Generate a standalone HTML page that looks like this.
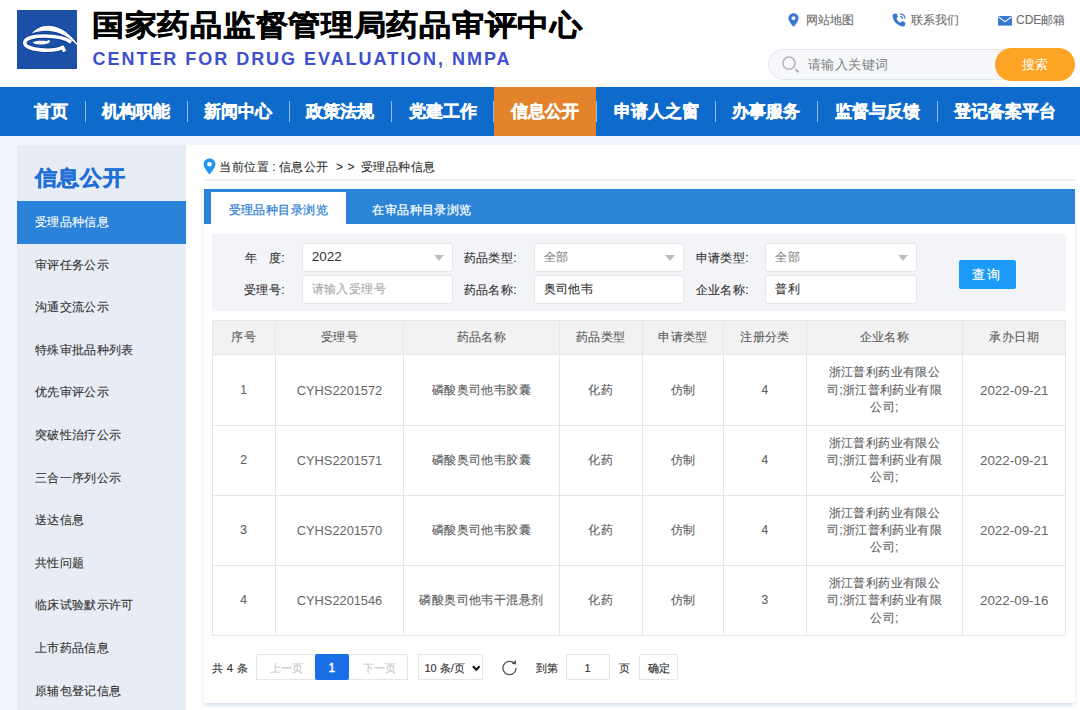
<!DOCTYPE html>
<html><head><meta charset="utf-8">
<style>
*{margin:0;padding:0;box-sizing:border-box}
html,body{width:1080px;height:710px;overflow:hidden;background:#f1f5fc;font-family:"Liberation Sans",sans-serif;position:relative}
.abs{position:absolute}
#hdr{position:absolute;left:0;top:0;width:1080px;height:87px;background:#fff}
#logo{left:17px;top:10px;width:60px;height:59px;background:#1c4fa6}
#t1{left:92px;top:6.5px;font-size:32.75px;font-weight:900;-webkit-text-stroke:.5px #000;letter-spacing:-0.28px;color:#000;white-space:nowrap;line-height:40px;transform:scaleY(.9);transform-origin:0 0}
#t2{left:92.5px;top:47.5px;font-size:18px;font-weight:bold;color:#3d4fcf;white-space:nowrap;letter-spacing:1.97px;line-height:22px}
.tl{font-size:12px;color:#6e6e6e;white-space:nowrap;line-height:16px}
#search{left:768px;top:49px;width:306px;height:31px;border:1px solid #e3e6ec;border-radius:16px;background:#f6f8fc}
#sbtn{left:995px;top:48px;width:80px;height:33px;border-radius:17px;background:#fda424;color:#fff;font-size:13px;line-height:34px;text-align:center}
#nav{left:0;top:87px;width:1080px;height:49px;background:#0e6bcb}
.ni{position:absolute;top:0;height:49px;line-height:49px;color:#fff;font-size:17px;font-weight:bold;-webkit-text-stroke:.4px #fff;white-space:nowrap}
.sep{position:absolute;top:14px;width:1px;height:21px;background:rgba(255,255,255,.55)}
#side{left:17px;top:145px;width:169px;height:600px;background:#e8edf5}
#sideT{left:34.8px;top:164px;font-size:22px;letter-spacing:.7px;font-weight:900;-webkit-text-stroke:.55px #1f6fd6;transform:scaleY(.95);transform-origin:0 0;color:#1f6fd6;line-height:30px;white-space:nowrap}
.si{position:absolute;left:0;width:169px;height:42.6px;line-height:43.6px;padding-left:18px;font-size:12px;letter-spacing:.35px;color:#333;white-space:nowrap}
.si.on{background:#2b82d9;color:#fff}
#panel{left:186px;top:145px;width:894px;height:565px;background:#fff}
#card{left:203.5px;top:189.2px;width:871.5px;height:513.8px;background:#fff;box-shadow:0 2.5px 5px -1px rgba(110,140,190,.35);border-radius:3px}

.hl{height:1px;background:#e6e6e6}
.vl{width:1px;background:#e6e6e6}
.cell{display:flex;align-items:center;justify-content:center;text-align:center;color:#606060;font-size:12px;letter-spacing:.4px;line-height:17.4px;padding-top:0.8px}
.cell.num{font-size:13.4px;letter-spacing:0}
.cell.id{font-size:12.8px;letter-spacing:0}
.lbl{position:absolute;font-size:12px;letter-spacing:.4px;color:#333;line-height:16px;white-space:nowrap}
.inp{position:absolute;height:28.5px;background:#fff;border:1px solid #e4e6ea;border-radius:3px;font-size:12px;letter-spacing:.4px;line-height:26.5px;padding-left:9px;color:#333;white-space:nowrap}
.arr{position:absolute;width:0;height:0;border-left:5.5px solid transparent;border-right:5.5px solid transparent;border-top:6px solid #bdbdbd}
.bc{position:absolute;top:158.5px;font-size:12px;letter-spacing:.45px;color:#333;line-height:16px;white-space:nowrap}
.pg{position:absolute;font-size:11px;letter-spacing:.3px;line-height:16px;white-space:nowrap;color:#333}
.cell,.lbl,.si,.bc,.inp,.tl,.pg{-webkit-text-stroke:.12px currentColor}
.cell.num,.cell.id{-webkit-text-stroke:0;color:#666}
</style></head><body>
<div id="hdr"></div>
<div id="logo" class="abs"></div>
<svg class="abs" style="left:17px;top:10px" width="60" height="59" viewBox="0 0 60 59">
<g stroke="#0a3a9a" stroke-width="1.6" fill="#0a3a9a" opacity=".8">
<path d="M14.6 23.8C23 12.5 46 9.5 64.5 40C46 17 25 19.5 16.8 22.8Z"/>
<path fill="none" stroke-width="5.4" d="M54.2 32.2C44 24.6 9 23.2 7.8 32.6C7.6 40.8 37 42.2 45.6 37.2L47.6 41.6"/>
</g>
<path d="M14.6 23.8C23 12.5 46 9.5 64.5 40C46 17 25 19.5 16.8 22.8Z" fill="#fff"/>
<path d="M54.2 32.2C44 24.6 9 23.2 7.8 32.6C7.6 40.8 37 42.2 45.6 37.2L47.6 41.6" stroke="#fff" stroke-width="3.6" fill="none" stroke-linejoin="round"/>
<path d="M15.8 32.8C18 30.5 26 30.4 29.8 31.2L31.4 30.1L33.4 30.9L31.6 33.2C26 34.6 19 35.2 15.8 32.8Z" fill="#fff"/>
</svg>
<div id="t1" class="abs">国家药品监督管理局药品审评中心</div>
<div id="t2" class="abs">CENTER FOR DRUG EVALUATION, NMPA</div>
<svg class="abs" style="left:788px;top:12.5px" width="11" height="14" viewBox="0 0 11 14"><path d="M5.5 0.3C2.6 0.3 0.4 2.5 0.4 5.2c0 3.2 5.1 8.6 5.1 8.6s5.1-5.4 5.1-8.6C10.6 2.5 8.4 0.3 5.5 0.3z" fill="#3a78d2"/><circle cx="5.5" cy="5.2" r="1.9" fill="#fff"/></svg>
<div class="abs tl" style="left:805.5px;top:11.5px">网站地图</div>
<svg class="abs" style="left:892px;top:13px" width="14" height="14" viewBox="0 0 14 14"><path d="M2.2 0.8L4.6 0.4 6 3.9 4.4 5.2C5.2 7.2 6.7 8.8 8.6 9.7L10 8.1 13.4 9.6 13 12.2C12.7 13.2 11.7 13.7 10.6 13.5 5.6 12.6 1.5 8.5 0.6 3.4 0.4 2.2 1 1.1 2.2 0.8Z" fill="#3a78d2"/><path d="M8 3.2A3 3 0 0 1 10.8 6M8.3 0.9A5.3 5.3 0 0 1 13.1 5.7" stroke="#3a78d2" stroke-width="1.1" fill="none"/></svg>
<div class="abs tl" style="left:910.5px;top:11.5px">联系我们</div>
<svg class="abs" style="left:998px;top:16px" width="14" height="10" viewBox="0 0 14 10"><rect x="0" y="0" width="14" height="9.6" fill="#3a78d2"/><path d="M0.3 0.8L7 5.6 13.7 0.8" stroke="#fff" stroke-width="1.1" fill="none"/></svg>
<div class="abs tl" style="left:1016px;top:11.5px">CDE邮箱</div>
<div id="search" class="abs"></div>
<svg class="abs" style="left:782px;top:55.5px" width="18" height="18" viewBox="0 0 18 18"><circle cx="7" cy="7.2" r="6.1" stroke="#b4b4b4" stroke-width="1.5" fill="none"/><path d="M13.4 13.2L16.5 16.3" stroke="#b4b4b4" stroke-width="2"/></svg>
<div class="abs" style="left:807.8px;top:57px;font-size:13px;letter-spacing:.5px;color:#808080;line-height:16px">请输入关键词</div>
<div id="sbtn" class="abs">搜索</div>
<div id="nav" class="abs">
 <div class="ni" style="left:34px">首页</div>
 <div class="sep" style="left:85px"></div>
 <div class="ni" style="left:102px">机构职能</div>
 <div class="sep" style="left:187px"></div>
 <div class="ni" style="left:204px">新闻中心</div>
 <div class="sep" style="left:289px"></div>
 <div class="ni" style="left:306px">政策法规</div>
 <div class="sep" style="left:391px"></div>
 <div class="ni" style="left:409px">党建工作</div>
 <div class="abs" style="left:494px;top:0;width:102.3px;height:49px;background:#e3842d"></div>
 <div class="sep" style="left:493px"></div>
 <div class="sep" style="left:595.5px"></div>
 <div class="ni" style="left:511px">信息公开</div>
 <div class="ni" style="left:614px">申请人之窗</div>
 <div class="sep" style="left:715px"></div>
 <div class="ni" style="left:732px">办事服务</div>
 <div class="sep" style="left:817px"></div>
 <div class="ni" style="left:835px">监督与反馈</div>
 <div class="sep" style="left:937px"></div>
 <div class="ni" style="left:954px">登记备案平台</div>
</div>
<div id="side" class="abs">
</div>
<div id="sideT" class="abs">信息公开</div>
<div class="abs" style="left:17px;top:201px;width:169px">
 <div class="si on" style="top:0">受理品种信息</div>
 <div class="si" style="top:42.6px">审评任务公示</div>
 <div class="si" style="top:85.2px">沟通交流公示</div>
 <div class="si" style="top:127.8px">特殊审批品种列表</div>
 <div class="si" style="top:170.4px">优先审评公示</div>
 <div class="si" style="top:213px">突破性治疗公示</div>
 <div class="si" style="top:255.6px">三合一序列公示</div>
 <div class="si" style="top:298.2px">送达信息</div>
 <div class="si" style="top:340.8px">共性问题</div>
 <div class="si" style="top:383.4px">临床试验默示许可</div>
 <div class="si" style="top:426px">上市药品信息</div>
 <div class="si" style="top:468.6px">原辅包登记信息</div>
</div>
<div id="panel" class="abs"></div><div id="card" class="abs"></div>
<!-- breadcrumb -->
<svg class="abs" style="left:203px;top:158px" width="13" height="17" viewBox="0 0 13 17"><path d="M6.5 0.5C3.1 0.5 0.6 3.1 0.6 6.3c0 3.7 5.9 10.2 5.9 10.2s5.9-6.5 5.9-10.2C12.4 3.1 9.9 0.5 6.5 0.5z" fill="#2196f3"/><circle cx="6.5" cy="6.3" r="2.3" fill="#fff"/></svg>
<div class="bc" style="left:219.3px">当前位置</div><div class="bc" style="left:272.3px">:</div><div class="bc" style="left:279px">信息公开</div><div class="bc" style="left:336px">&gt;</div><div class="bc" style="left:347.5px">&gt;</div><div class="bc" style="left:361px">受理品种信息</div>
<div class="abs" style="left:203.6px;top:179px;width:871.4px;height:2px;background:#efefef"></div>
<!-- tabs -->
<div class="abs" style="left:203.6px;top:189.2px;width:871.4px;height:35.2px;background:#2b84d8"></div>
<div class="abs" style="left:210.6px;top:192px;width:135.2px;height:32.4px;background:#fff"></div>
<div class="abs" style="left:228.5px;top:201.5px;font-size:12px;letter-spacing:.45px;font-weight:500;-webkit-text-stroke:.25px #2f7fd5;color:#2f7fd5;line-height:16px;white-space:nowrap">受理品种目录浏览</div>
<div class="abs" style="left:372.2px;top:201.5px;font-size:12px;letter-spacing:.45px;font-weight:500;-webkit-text-stroke:.25px #fff;color:#fff;line-height:16px;white-space:nowrap">在审品种目录浏览</div>
<!-- filter -->
<div class="abs" style="left:211.7px;top:233.7px;width:854.5px;height:77.1px;background:#f3f4f8"></div>
<div class="lbl" style="right:795px;top:249.5px">年&nbsp;&nbsp; 度:</div>
<div class="lbl" style="right:795px;top:281.5px">受理号:</div>
<div class="lbl" style="right:563px;top:249.5px">药品类型:</div>
<div class="lbl" style="right:563px;top:281.5px">药品名称:</div>
<div class="lbl" style="right:331px;top:249.5px">申请类型:</div>
<div class="lbl" style="right:331px;top:281.5px">企业名称:</div>
<div class="inp" style="left:301.7px;top:243.3px;width:151.8px;font-size:13.5px;-webkit-text-stroke:0;letter-spacing:0">2022</div>
<div class="inp" style="left:301.7px;top:275.3px;width:151.8px;color:#aaa">请输入受理号</div>
<div class="inp" style="left:533.6px;top:243.3px;width:150.8px;color:#888">全部</div>
<div class="inp" style="left:533.6px;top:275.3px;width:150.8px">奥司他韦</div>
<div class="inp" style="left:765.4px;top:243.3px;width:151.3px;color:#888">全部</div>
<div class="inp" style="left:765.4px;top:275.3px;width:151.3px">普利</div>
<div class="arr" style="left:433.5px;top:255px"></div>
<div class="arr" style="left:665px;top:255px"></div>
<div class="arr" style="left:897.5px;top:255px"></div>
<div class="abs" style="left:959.2px;top:260px;width:56.6px;height:28.7px;background:#1b9af7;border-radius:2px;color:#fff;font-size:13px;-webkit-text-stroke:.2px #fff;line-height:30px;text-align:center;letter-spacing:2px;text-indent:0px">查询</div>
<!-- table -->
<div class="abs" style="left:212.2px;top:320.2px;width:853.5px;height:34.400000000000034px;background:#f2f2f2"></div>
<div class="abs hl" style="left:212.2px;top:319.7px;width:854px"></div>
<div class="abs hl" style="left:212.2px;top:354.1px;width:854px"></div>
<div class="abs hl" style="left:212.2px;top:424.7px;width:854px"></div>
<div class="abs hl" style="left:212.2px;top:494.8px;width:854px"></div>
<div class="abs hl" style="left:212.2px;top:564.9px;width:854px"></div>
<div class="abs hl" style="left:212.2px;top:635.0px;width:854px"></div>
<div class="abs vl" style="left:211.7px;top:320.2px;height:315.3px"></div>
<div class="abs vl" style="left:274.9px;top:320.2px;height:315.3px"></div>
<div class="abs vl" style="left:403.2px;top:320.2px;height:315.3px"></div>
<div class="abs vl" style="left:558.8px;top:320.2px;height:315.3px"></div>
<div class="abs vl" style="left:641.9px;top:320.2px;height:315.3px"></div>
<div class="abs vl" style="left:723.2px;top:320.2px;height:315.3px"></div>
<div class="abs vl" style="left:805.7px;top:320.2px;height:315.3px"></div>
<div class="abs vl" style="left:962.2px;top:320.2px;height:315.3px"></div>
<div class="abs vl" style="left:1065.2px;top:320.2px;height:315.3px"></div>
<div class="abs cell th" style="left:212.2px;top:320.2px;width:63.2px;height:34.4px"><span>序号</span></div>
<div class="abs cell th" style="left:275.4px;top:320.2px;width:128.3px;height:34.4px"><span>受理号</span></div>
<div class="abs cell th" style="left:403.7px;top:320.2px;width:155.6px;height:34.4px"><span>药品名称</span></div>
<div class="abs cell th" style="left:559.3px;top:320.2px;width:83.1px;height:34.4px"><span>药品类型</span></div>
<div class="abs cell th" style="left:642.4px;top:320.2px;width:81.3px;height:34.4px"><span>申请类型</span></div>
<div class="abs cell th" style="left:723.7px;top:320.2px;width:82.5px;height:34.4px"><span>注册分类</span></div>
<div class="abs cell th" style="left:806.2px;top:320.2px;width:156.5px;height:34.4px"><span>企业名称</span></div>
<div class="abs cell th" style="left:962.7px;top:320.2px;width:103.0px;height:34.4px"><span>承办日期</span></div>
<div class="abs cell td" style="left:212.2px;top:354.6px;width:63.2px;height:70.6px"><span>1</span></div>
<div class="abs cell td id" style="left:275.4px;top:354.6px;width:128.3px;height:70.6px"><span>CYHS2201572</span></div>
<div class="abs cell td" style="left:403.7px;top:354.6px;width:155.6px;height:70.6px"><span>磷酸奥司他韦胶囊</span></div>
<div class="abs cell td" style="left:559.3px;top:354.6px;width:83.1px;height:70.6px"><span>化药</span></div>
<div class="abs cell td" style="left:642.4px;top:354.6px;width:81.3px;height:70.6px"><span>仿制</span></div>
<div class="abs cell td" style="left:723.7px;top:354.6px;width:82.5px;height:70.6px"><span>4</span></div>
<div class="abs cell td co" style="left:806.2px;top:354.6px;width:156.5px;height:70.6px"><span>浙江普利药业有限公<br>司;浙江普利药业有限<br>公司;</span></div>
<div class="abs cell td num" style="left:962.7px;top:354.6px;width:103.0px;height:70.6px"><span>2022-09-21</span></div>
<div class="abs cell td" style="left:212.2px;top:425.2px;width:63.2px;height:70.1px"><span>2</span></div>
<div class="abs cell td id" style="left:275.4px;top:425.2px;width:128.3px;height:70.1px"><span>CYHS2201571</span></div>
<div class="abs cell td" style="left:403.7px;top:425.2px;width:155.6px;height:70.1px"><span>磷酸奥司他韦胶囊</span></div>
<div class="abs cell td" style="left:559.3px;top:425.2px;width:83.1px;height:70.1px"><span>化药</span></div>
<div class="abs cell td" style="left:642.4px;top:425.2px;width:81.3px;height:70.1px"><span>仿制</span></div>
<div class="abs cell td" style="left:723.7px;top:425.2px;width:82.5px;height:70.1px"><span>4</span></div>
<div class="abs cell td co" style="left:806.2px;top:425.2px;width:156.5px;height:70.1px"><span>浙江普利药业有限公<br>司;浙江普利药业有限<br>公司;</span></div>
<div class="abs cell td num" style="left:962.7px;top:425.2px;width:103.0px;height:70.1px"><span>2022-09-21</span></div>
<div class="abs cell td" style="left:212.2px;top:495.3px;width:63.2px;height:70.1px"><span>3</span></div>
<div class="abs cell td id" style="left:275.4px;top:495.3px;width:128.3px;height:70.1px"><span>CYHS2201570</span></div>
<div class="abs cell td" style="left:403.7px;top:495.3px;width:155.6px;height:70.1px"><span>磷酸奥司他韦胶囊</span></div>
<div class="abs cell td" style="left:559.3px;top:495.3px;width:83.1px;height:70.1px"><span>化药</span></div>
<div class="abs cell td" style="left:642.4px;top:495.3px;width:81.3px;height:70.1px"><span>仿制</span></div>
<div class="abs cell td" style="left:723.7px;top:495.3px;width:82.5px;height:70.1px"><span>4</span></div>
<div class="abs cell td co" style="left:806.2px;top:495.3px;width:156.5px;height:70.1px"><span>浙江普利药业有限公<br>司;浙江普利药业有限<br>公司;</span></div>
<div class="abs cell td num" style="left:962.7px;top:495.3px;width:103.0px;height:70.1px"><span>2022-09-21</span></div>
<div class="abs cell td" style="left:212.2px;top:565.4px;width:63.2px;height:70.1px"><span>4</span></div>
<div class="abs cell td id" style="left:275.4px;top:565.4px;width:128.3px;height:70.1px"><span>CYHS2201546</span></div>
<div class="abs cell td" style="left:403.7px;top:565.4px;width:155.6px;height:70.1px"><span>磷酸奥司他韦干混悬剂</span></div>
<div class="abs cell td" style="left:559.3px;top:565.4px;width:83.1px;height:70.1px"><span>化药</span></div>
<div class="abs cell td" style="left:642.4px;top:565.4px;width:81.3px;height:70.1px"><span>仿制</span></div>
<div class="abs cell td" style="left:723.7px;top:565.4px;width:82.5px;height:70.1px"><span>3</span></div>
<div class="abs cell td co" style="left:806.2px;top:565.4px;width:156.5px;height:70.1px"><span>浙江普利药业有限公<br>司;浙江普利药业有限<br>公司;</span></div>
<div class="abs cell td num" style="left:962.7px;top:565.4px;width:103.0px;height:70.1px"><span>2022-09-16</span></div>
<!-- pager -->
<div class="pg" style="left:212px;top:659.5px;font-size:11.4px">共 4 条</div>
<div class="abs" style="left:255.6px;top:654.4px;width:152.7px;height:26px;border:1px solid #e4e6ea;background:#fff"></div>
<div class="abs" style="left:314.8px;top:654.4px;width:34.2px;height:26px;background:#1a6fe6;border-radius:2px"></div>
<div class="pg" style="left:314.8px;top:659.5px;width:34.2px;text-align:center;color:#fff;font-size:12px;-webkit-text-stroke:.4px #fff">1</div>
<div class="pg" style="left:269.5px;top:659.5px;color:#c8c8c8">上一页</div>
<div class="pg" style="left:362.8px;top:659.5px;color:#c8c8c8">下一页</div>
<div class="abs" style="left:417.6px;top:654.4px;width:65.7px;height:26px;border:1px solid #e4e6ea;background:#fff"></div>
<div class="pg" style="left:424.5px;top:659.5px;letter-spacing:0">10 条/页</div>
<svg class="abs" style="left:471.5px;top:665px" width="9" height="7" viewBox="0 0 9 7"><path d="M1 1.2L4.3 4.8 7.6 1.2" stroke="#111" stroke-width="2" fill="none"/></svg>
<svg class="abs" style="left:501px;top:658.5px" width="17" height="17" viewBox="0 0 17 17"><path d="M13.4 4.6A6.6 6.6 0 1 0 15.1 8.9" stroke="#555" stroke-width="1.3" fill="none"/><path d="M10.6 4.8L15.2 5.4 14.8 1z" fill="#555"/></svg>
<div class="pg" style="left:535.6px;top:659.5px">到第</div>
<div class="abs" style="left:565.7px;top:654.4px;width:44px;height:26px;border:1px solid #e4e6ea;background:#fff"></div>
<div class="pg" style="left:565.7px;top:659.5px;width:44px;text-align:center">1</div>
<div class="pg" style="left:619px;top:659.5px">页</div>
<div class="abs" style="left:638.9px;top:654.4px;width:39.3px;height:26px;border:1px solid #e4e6ea;background:#fff;border-radius:2px"></div>
<div class="pg" style="left:638.9px;top:660px;width:39.3px;text-align:center;font-size:11px;letter-spacing:0;color:#222">确定</div>

</body></html>
